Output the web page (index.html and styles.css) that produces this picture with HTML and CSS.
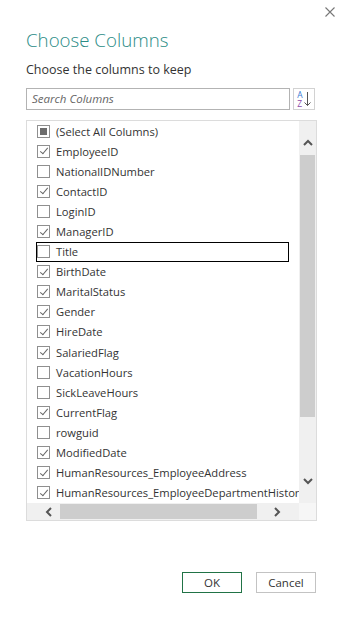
FILE: index.html
```html
<!DOCTYPE html>
<html lang="en">

<head>
  <meta charset="UTF-8">
  <meta name="viewport" content="width=device-width, initial-scale=1.0">
  <title>Choose Columns</title>
  <link rel="stylesheet" href="styles.css">
</head>

<body>
  <div class="topbar">
    <svg class="close" width="10" height="10" viewBox="0 0 10 10">
      <path d="M0.5 0.5 L9.5 9.5 M9.5 0.5 L0.5 9.5" stroke="#777" stroke-width="1.1" fill="none" />
    </svg>
  </div>

  <div class="dialog">
    <h1 class="title">Choose Columns</h1>
    <p class="subtitle">Choose the columns to keep</p>

    <div class="search-row">
      <div class="search">Search Columns</div>
      <div class="sort">
        <div class="sort-letters">
          <span class="letter-a">A</span>
          <span class="letter-z">Z</span>
        </div>
        <svg width="7" height="16" viewBox="0 0 7 16">
          <path d="M3.5 1 V14.5 M0.5 11.5 L3.5 14.5 L6.5 11.5" stroke="#555" stroke-width="1" fill="none" />
        </svg>
      </div>
    </div>

    <div class="list">
      <div class="items">
        <div class="row"><span class="cb partial"></span>(Select All Columns)</div>
        <div class="row"><span class="cb checked"></span>EmployeeID</div>
        <div class="row"><span class="cb"></span>NationalIDNumber</div>
        <div class="row"><span class="cb checked"></span>ContactID</div>
        <div class="row"><span class="cb"></span>LoginID</div>
        <div class="row"><span class="cb checked"></span>ManagerID</div>
        <div class="row focused"><span class="cb"></span>Title</div>
        <div class="row"><span class="cb checked"></span>BirthDate</div>
        <div class="row"><span class="cb checked"></span>MaritalStatus</div>
        <div class="row"><span class="cb checked"></span>Gender</div>
        <div class="row"><span class="cb checked"></span>HireDate</div>
        <div class="row"><span class="cb checked"></span>SalariedFlag</div>
        <div class="row"><span class="cb"></span>VacationHours</div>
        <div class="row"><span class="cb"></span>SickLeaveHours</div>
        <div class="row"><span class="cb checked"></span>CurrentFlag</div>
        <div class="row"><span class="cb"></span>rowguid</div>
        <div class="row"><span class="cb checked"></span>ModifiedDate</div>
        <div class="row"><span class="cb checked"></span>HumanResources_EmployeeAddress</div>
        <div class="row"><span class="cb checked"></span>HumanResources_EmployeeDepartmentHistory</div>
      </div>

      <div class="vscroll">
        <div class="vbtn up">
          <svg width="10" height="7" viewBox="0 0 10 7">
            <polyline points="1,6 5,2 9,6" stroke="#555" stroke-width="2" fill="none" />
          </svg>
        </div>
        <div class="vthumb"></div>
        <div class="spacer"></div>
        <div class="vbtn down">
          <svg width="10" height="7" viewBox="0 0 10 7">
            <polyline points="1,1 5,5 9,1" stroke="#555" stroke-width="2" fill="none" />
          </svg>
        </div>
      </div>

      <div class="hscroll">
        <div class="hbtn left">
          <svg width="7" height="10" viewBox="0 0 7 10">
            <polyline points="6,1 2,5 6,9" stroke="#555" stroke-width="2" fill="none" />
          </svg>
        </div>
        <div class="hthumb"></div>
        <div class="spacer"></div>
        <div class="hbtn right">
          <svg width="7" height="10" viewBox="0 0 7 10">
            <polyline points="1,1 5,5 1,9" stroke="#555" stroke-width="2" fill="none" />
          </svg>
        </div>
      </div>

      <div class="corner"></div>
    </div>

    <div class="buttons">
      <button class="btn ok">OK</button>
      <button class="btn">Cancel</button>
    </div>
  </div>
</body>

</html>
```

FILE: styles.css
```css
body {
  margin: 0;
  padding: 0;
  font-family: 'Open Sans', sans-serif;
  color: #333;
  background: #fff;
}

.topbar {
  display: flex;
  justify-content: flex-end;
  padding: 7px 9px 0 0;
  height: 13px;
}

.dialog {
  padding: 0 0 0 26px;
}

.title {
  margin: 8px 0 0;
  font-size: 18.7px;
  font-weight: 300;
  line-height: 24px;
  color: #2b8c86;
}

.subtitle {
  margin: 9px 0 0;
  font-size: 12.5px;
  line-height: 18px;
  color: #333;
}

.search-row {
  display: flex;
  gap: 3px;
  margin-top: 9px;
  height: 22px;
}

.search {
  width: 264px;
  box-sizing: border-box;
  border: 1px solid #b3b3b3;
  padding: 0 5px;
  font-size: 11.5px;
  font-style: italic;
  line-height: 20px;
  color: #666;
}

.sort {
  width: 22px;
  box-sizing: border-box;
  border: 1px solid #d2d2d2;
  display: flex;
  align-items: center;
  justify-content: center;
  gap: 1px;
}

.sort-letters {
  display: flex;
  flex-direction: column;
  font-size: 8.5px;
  line-height: 9px;
}

.letter-a {
  color: #3b7bd4;
}

.letter-z {
  color: #8a47a8;
}

/* column list with its own scrollbars */
.list {
  margin-top: 10px;
  width: 291px;
  height: 401px;
  box-sizing: border-box;
  border: 1px solid #dcdcdc;
  display: grid;
  grid-template-columns: 1fr 17px;
  grid-template-rows: 1fr 17px;
}

.items {
  overflow: hidden;
}

.row {
  height: 20.1px;
  box-sizing: border-box;
  margin: 0 10px 0 9px;
  border: 1px solid transparent;
  display: flex;
  align-items: center;
  gap: 6px;
  white-space: nowrap;
  font-size: 11.2px;
  color: #333;
}

.row.focused {
  border-color: #000;
}

.cb {
  flex: none;
  width: 13px;
  height: 13px;
  box-sizing: border-box;
  border: 1px solid #8f8f8f;
  background: #fff;
  position: relative;
}

.cb.checked::after {
  content: "";
  position: absolute;
  left: 3.5px;
  top: 0.5px;
  width: 3px;
  height: 7px;
  border-right: 1.3px solid #666;
  border-bottom: 1.3px solid #666;
  transform: rotate(40deg);
}

.cb.partial::after {
  content: "";
  position: absolute;
  left: 2px;
  top: 2px;
  width: 7px;
  height: 7px;
  background: #6d6d6d;
}

.vscroll {
  background: #f0f0f0;
  display: flex;
  flex-direction: column;
}

.vbtn {
  height: 34px;
  display: flex;
  align-items: center;
  justify-content: center;
  box-sizing: border-box;
}

.vbtn.up {
  padding-top: 8px;
}

.vbtn.down {
  padding-bottom: 9px;
}

.vthumb {
  height: 262px;
  margin: 0 1px 0 1px;
  background: #cdcdcd;
}

.spacer {
  flex: 1;
}

.hscroll {
  background: #f0f0f0;
  display: flex;
}

.hbtn {
  display: flex;
  align-items: center;
  justify-content: center;
  box-sizing: border-box;
}

.hbtn.left {
  width: 33px;
  padding-left: 9px;
}

.hbtn.right {
  width: 32px;
  margin-right: 6px;
}

.hthumb {
  width: 197px;
  margin: 1px 0;
  background: #cdcdcd;
}

.corner {
  background: #f6f6f6;
}

.buttons {
  display: flex;
  justify-content: flex-end;
  gap: 14px;
  width: 290px;
  margin-top: 51px;
}

.btn {
  width: 60px;
  height: 21px;
  padding: 0;
  background: #fff;
  border: 1px solid #c3c3c3;
  font-family: 'Open Sans', sans-serif;
  font-size: 11.5px;
  color: #333;
}

.btn.ok {
  border-color: #217346;
}
```
